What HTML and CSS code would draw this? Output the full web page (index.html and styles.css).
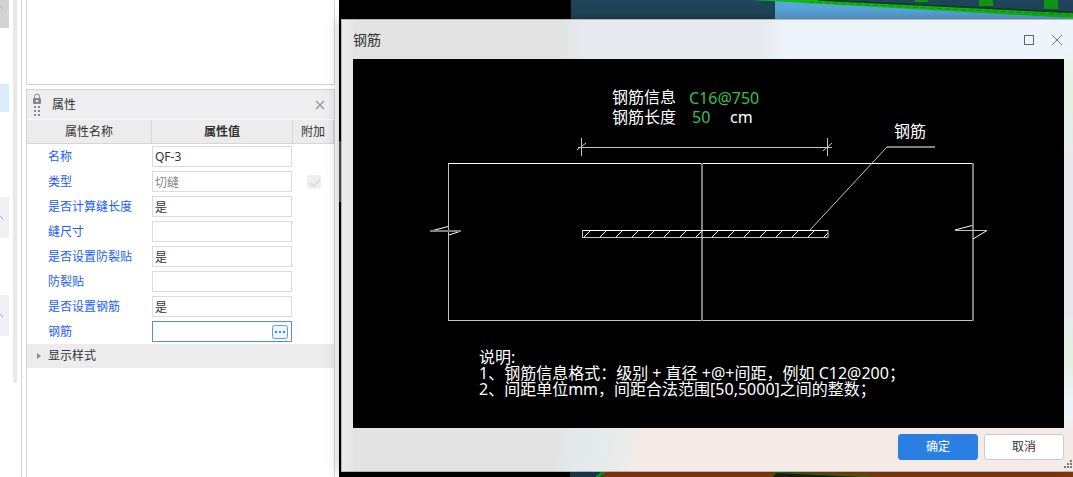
FILE: index.html
```html
<!DOCTYPE html>
<html lang="zh-CN">
<head>
<meta charset="utf-8">
<title>钢筋</title>
<link rel="stylesheet" href="styles.css">
</head>
<body>
<div class="app">
  <aside class="rail">
    <div class="rail-tabs">
      <div class="rail-tab rail-tab-top"><svg class="chevron" viewBox="0 0 9 9"><path d="M0 3 L3 6"/></svg></div>
      <div class="rail-tab rail-tab-active"></div>
      <div class="rail-tab rail-tab-group"><svg class="chevron" viewBox="0 0 9 9"><path d="M0 3 L3 6"/></svg></div>
      <div class="rail-tab rail-tab-group rail-tab-last"><svg class="chevron" viewBox="0 0 9 9"><path d="M0 3 L3 6"/></svg></div>
    </div>
    <div class="rail-scroll"></div>
  </aside>

  <section class="dock">
    <div class="list-panel"></div>
    <div class="props">
      <header class="props-title">
        <svg class="lock" viewBox="0 0 10 23">
          <path d="M2.500 5V3.500a2.500 2.500 0 0 1 5 0V5" fill="none" stroke="#85878c"/>
          <rect x="1" y="5" width="8" height="6" rx="1" fill="#85878c"/>
          <rect x="4" y="7" width="2" height="2" fill="#eeeef0"/>
          <path d="M2 13h2v2H2zM6 13h2v2H6zM2 17h2v2H2zM6 17h2v2H6zM2 21h2v2H2zM6 21h2v2H6z" fill="#85878c"/>
        </svg>
        <h2>属性</h2>
        <button class="close" aria-label="关闭属性"><svg viewBox="0 0 10 10"><path d="M1 1L9 9M9 1L1 9"/></svg></button>
      </header>
      <table class="grid">
        <colgroup><col class="col-name"><col><col class="col-extra"></colgroup>
        <thead><tr><th>属性名称</th><th class="strong">属性值</th><th>附加</th></tr></thead>
        <tbody>
          <tr><td><label for="p1">名称</label></td><td><input id="p1" class="field" value="QF-3"></td><td></td></tr>
          <tr><td><label for="p2">类型</label></td><td><input id="p2" class="field" value="切缝" disabled></td><td class="extra"><input type="checkbox" class="tick" aria-label="类型附加" checked disabled></td></tr>
          <tr><td><label for="p3">是否计算缝长度</label></td><td><input id="p3" class="field" value="是"></td><td></td></tr>
          <tr><td><label for="p4">缝尺寸</label></td><td><input id="p4" class="field"></td><td></td></tr>
          <tr><td><label for="p5">是否设置防裂贴</label></td><td><input id="p5" class="field" value="是"></td><td></td></tr>
          <tr><td><label for="p6">防裂贴</label></td><td><input id="p6" class="field"></td><td></td></tr>
          <tr><td><label for="p7">是否设置钢筋</label></td><td><input id="p7" class="field" value="是"></td><td></td></tr>
          <tr><td><label for="p8">钢筋</label></td><td><div class="field picker"><input id="p8"><button class="more" aria-label="编辑钢筋"><svg viewBox="0 0 16 14"><rect x=".5" y=".5" width="15" height="13" rx="2" fill="#edf5fc" stroke="#5c9fe0"/><path d="M3 6h2v2H3zM7 6h2v2H7zM11 6h2v2h-2z" fill="#3f87d9"/></svg></button></div></td><td></td></tr>
        </tbody>
      </table>
      <button class="group"><svg viewBox="0 0 4 6"><path d="M0 0L4 3L0 6z"/></svg>显示样式</button>
    </div>
  </section>

  <main class="scene">
    <svg class="model" viewBox="0 0 734 477" preserveAspectRatio="xMidYMid slice">
      <rect width="734" height="477" fill="#000"/>
      <rect y="141" width="3" height="61" fill="#555"/>
      <rect x="232" width="502" height="24" fill="#1f455a"/>
      <path d="M436 0H500L734 14V24H436z" fill="#5aa7dc"/>
      <path d="M412 0H734V12L479 0z" fill="#1f455a"/>
      <path d="M412 0H479L734 13V18z" fill="#12b914"/>
      <path d="M479 0L734 12.500" stroke="#0b3d17" stroke-width="1.500"/>
      <path d="M470 2L734 15" stroke="#087e12" stroke-dasharray="5 3" stroke-width=".7"/>
      <path d="M576 0h13v2h-13zM640 0h14v6h-14zM705 0h14v9h-14z" fill="#119414"/>
      <rect x="231" y="470" width="36" height="7" fill="#1f3d52"/>
      <rect x="264" y="470" width="470" height="7" fill="#8a3c10"/>
      <path d="M256 477L263 471H268L261 477z" fill="#0da515"/>
      <path d="M433 477L438 472L534 477z" fill="#241a16"/>
      <path d="M433 477L438 472.500L534 477" fill="none" stroke="#078c10"/>
    </svg>

    <div class="dialog" role="dialog" aria-labelledby="dialog-title">
      <header class="dialog-title">
        <h1 id="dialog-title">钢筋</h1>
        <button class="win" aria-label="最大化"><svg viewBox="0 0 12 12"><rect x="1.500" y="1.500" width="9" height="9" stroke="#666"/></svg></button>
        <button class="win" aria-label="关闭"><svg viewBox="0 0 12 12"><path d="M1 1L11 11M11 1L1 11" stroke="#777b80"/></svg></button>
      </header>
      <svg class="drawing" viewBox="0 0 711 369">
        <defs>
          <pattern id="hatch" x="229" y="171" width="16" height="8" patternUnits="userSpaceOnUse">
            <path d="M2 7L8 1" stroke="#fff"/>
          </pattern>
        </defs>
        <g class="lines">
          <path class="bright" d="M95 104.500H620"/>
          <path d="M95.500 104V262M95 261.500H620"/>
          <path class="wide" d="M620 104V262M349 104V262"/>
          <path class="bright" d="M78 172L95 167.500M108 172L96 176"/>
          <path class="wide" d="M77 172H108"/>
          <path class="bright" d="M602 171L619 166.500M634 171.500L620 180"/>
          <path d="M602 171.500H634"/>
          <path d="M225 88.500H479M228.500 79V97M474.500 79V97M224 91L233 84M470 92L479 84"/>
          <path d="M457 171L534 88"/>
          <path class="wide" d="M534 88H582"/>
          <rect x="229" y="171" width="246" height="8" fill="url(#hatch)" stroke="none"/>
          <path class="bright" d="M229 171.500H475"/>
          <path d="M229.500 171V179M229 178.500H475M475 171V179"/>
        </g>
        <g class="words">
          <text x="259" y="44">钢筋信息</text>
          <text class="value" x="336" y="45">C16@750</text>
          <text x="259" y="64">钢筋长度</text>
          <text class="value" x="339" y="64">50</text>
          <text x="377" y="64">cm</text>
          <text x="541" y="78">钢筋</text>
          <text x="126" y="304">说明:</text>
          <text x="126" y="320">1、钢筋信息格式：级别 + 直径 +@+间距，例如 C12@200；</text>
          <text x="126" y="336">2、间距单位mm，间距合法范围[50,5000]之间的整数；</text>
        </g>
      </svg>
      <footer class="actions">
        <button class="btn primary">确定</button>
        <button class="btn">取消</button>
        <svg class="grip" viewBox="0 0 8 8"><path d="M6 0h2v2H6zM3 3h2v2H3zM6 3h2v2H6zM0 6h2v2H0zM3 6h2v2H3zM6 6h2v2H6z"/></svg>
      </footer>
    </div>
  </main>
</div>
</body>
</html>
```
FILE: styles.css
```css
* { box-sizing: border-box; }

body {
  margin: 0;
  overflow: hidden;
  background: #fff;
  color: #333;
  font: 12px/16px "Noto Sans", "Noto Sans CJK SC", sans-serif;
}

h1, h2 { margin: 0; font-weight: 400; }
button, input { font: inherit; color: inherit; }
button { padding: 0; border: 0; background: none; }
svg { display: block; }

.app { display: flex; height: 100vh; }

/* left rail */
.rail {
  display: flex;
  flex: none;
  gap: 4px;
  width: 22px;
  border-right: 1px solid #d5d5d5;
}
.rail-tabs { width: 9px; }
.rail-tab { height: 28px; }
.rail-tab-top { padding-top: 3px; background: #d3d3d3; }
.rail-tab-active { margin-top: 56px; background: #dbecff; }
.rail-tab-group { height: 41px; margin-top: 85px; padding-top: 16px; background: #eff0f5; }
.rail-tab-last { margin-top: 57px; }
.chevron { width: 9px; height: 9px; fill: none; stroke: #9aa9c4; }
.rail-scroll { width: 4px; height: 383px; border-radius: 0 0 2px 2px; background: #e9e9e9; }

/* property dock */
.dock {
  display: flex;
  flex: none;
  flex-direction: column;
  gap: 4px;
  width: 317px;
  padding: 0 4px;
}
.list-panel { height: 85px; border: 1px solid #d3d3d3; border-top: 0; }
.props { flex: 1; border: 1px solid #d3d3d3; border-bottom: 0; }
.props-title {
  display: flex;
  align-items: center;
  height: 30px;
  padding: 0 9px 0 5px;
  border-bottom: 1px solid #fafafa;
  background: #eeeef1;
}
.props-title h2 { flex: 1; margin-left: 10px; font-size: 12px; }
.lock { width: 10px; height: 23px; }
.close svg { width: 10px; height: 10px; fill: none; stroke: #999; stroke-width: 1.5px; }

.grid { width: 100%; border-spacing: 0; table-layout: fixed; }
.col-name { width: 125px; }
.col-extra { width: 41px; }
.grid th {
  height: 24px;
  padding: 0;
  border: solid #d6d6d6;
  border-width: 0 1px 1px 0;
  background: #ececec;
  font-weight: 400;
}
.grid th.strong { font-weight: 700; }
.grid td { height: 25px; padding: 0; }
.grid label { margin-left: 21px; color: #1a5cff; }
.field {
  display: block;
  width: 140px;
  height: 21px;
  padding: 0 2px;
  border: 1px solid #dcdcdc;
  border-radius: 0;
  background: #fff;
}
.field:disabled { color: #888; }
.picker { display: flex; align-items: center; padding-right: 3px; border-color: #5b8bd4; }
.picker input { flex: 1; min-width: 0; height: 16px; padding: 0; border: 0; outline: 0; }
.more svg { width: 16px; height: 14px; }
.tick {
  display: block;
  width: 14px;
  height: 14px;
  margin: 0 auto;
  border-radius: 2px;
  appearance: none;
  background: #efefef;
}
.tick::before {
  content: "";
  display: block;
  width: 8px;
  height: 4px;
  margin: 4px 3px;
  border: solid #dcdcdc;
  border-width: 0 0 2px 2px;
  rotate: -45deg;
}
.group {
  display: flex;
  align-items: center;
  gap: 7px;
  width: 100%;
  height: 24px;
  padding-left: 10px;
  background: #ececec;
}
.group svg { width: 4px; height: 6px; fill: #888; }

/* model view with the dialog over it */
.scene { position: relative; flex: 1; min-width: 0; padding: 19px 0 5px 2px; }
.model { position: absolute; inset: 0; width: 100%; height: 100%; }
.dialog {
  position: relative;
  display: flex;
  flex-direction: column;
  height: 100%;
  padding: 0 9px 0 11px;
  border: 1px solid #b7b5b4;
  border-right: 0;
  background:
    linear-gradient(105deg, transparent 30%, #e4e9ec 33%, #e6ebea 37%, #f4ebe6 41%, #f4ebe6) bottom / 100% 43px no-repeat,
    linear-gradient(#edf4fb 5%, #e3efdf 17%, #e6eaee 30%, #e6eaee 65%, #e3efdf 75%, #edf4fb 85%, #f4ebe6 96%) right / 9px 100% no-repeat,
    linear-gradient(90deg, #ececec, #e3e3e3 2%, #e3e3e3 30%, #e6eaee 33%, #e6eaee 57%, #edf4fb 61%, #edf4fb);
  box-shadow: 0 0 14px rgba(0, 0, 0, .35);
}
.dialog-title { display: flex; align-items: center; gap: 16px; height: 39px; padding-right: 1px; }
.dialog-title h1 { flex: 1; font-size: 14px; line-height: 20px; }
.win svg { width: 12px; height: 12px; fill: none; }
.drawing { flex: 1; width: 100%; min-height: 0; background: #000; }
.lines { fill: none; stroke: #c4c4c4; stroke-width: 1px; }
.lines .bright { stroke: #fff; }
.lines .wide { stroke: #808080; stroke-width: 2px; }
.words { fill: #fff; font-size: 16px; }
.words .value { fill: #36c050; }
.actions { display: flex; justify-content: flex-end; gap: 6px; height: 43px; padding-top: 6px; }
.btn {
  width: 80px;
  height: 26px;
  border: 1px solid #ccc;
  border-radius: 3px;
  background: #fff;
}
.btn.primary { border-color: #2c7fe2; background: #2c7fe2; color: #fff; }
.grip { position: absolute; right: 1px; bottom: 3px; width: 8px; height: 8px; fill: #777b80; }
```
